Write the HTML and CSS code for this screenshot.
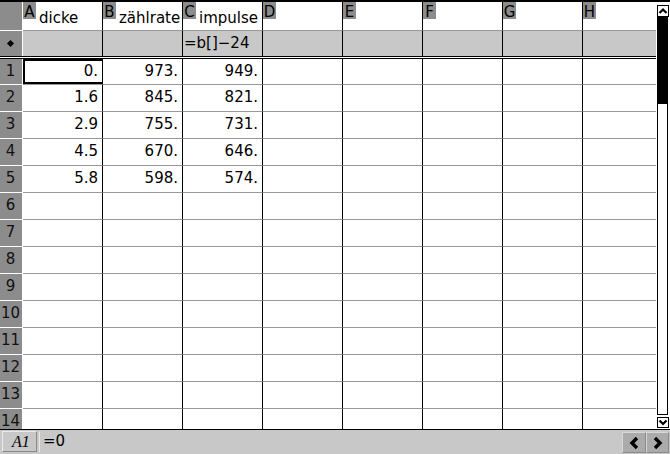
FILE: index.html
```html
<!DOCTYPE html>
<html>
<head>
<meta charset="utf-8">
<link rel="stylesheet" href="styles.css">
</head>
<body>
<div class="app">
  <div class="main">
    <div class="sheet-wrap">
      <div class="sheet">
        <div class="rh"></div>
        <div class="ch"><span class="cl">A</span><span class="cn">dicke</span></div>
        <div class="ch"><span class="cl">B</span><span class="cn">zählrate</span></div>
        <div class="ch"><span class="cl">C</span><span class="cn">impulse</span></div>
        <div class="ch"><span class="cl">D</span></div>
        <div class="ch"><span class="cl">E</span></div>
        <div class="ch"><span class="cl">F</span></div>
        <div class="ch"><span class="cl">G</span></div>
        <div class="ch"><span class="cl">H</span></div>

        <div class="rh rh-formula"><span class="diamond"></span></div>
        <div class="fc"></div>
        <div class="fc"></div>
        <div class="fc">=b[]−24</div>
        <div class="fc"></div>
        <div class="fc"></div>
        <div class="fc"></div>
        <div class="fc"></div>
        <div class="fc"></div>

        <div class="divider"></div>

        <div class="rh">1</div>
        <div class="c num sel">0.</div><div class="c num">973.</div><div class="c num">949.</div><div class="c"></div><div class="c"></div><div class="c"></div><div class="c"></div><div class="c"></div>
        <div class="rh">2</div>
        <div class="c num">1.6</div><div class="c num">845.</div><div class="c num">821.</div><div class="c"></div><div class="c"></div><div class="c"></div><div class="c"></div><div class="c"></div>
        <div class="rh">3</div>
        <div class="c num">2.9</div><div class="c num">755.</div><div class="c num">731.</div><div class="c"></div><div class="c"></div><div class="c"></div><div class="c"></div><div class="c"></div>
        <div class="rh">4</div>
        <div class="c num">4.5</div><div class="c num">670.</div><div class="c num">646.</div><div class="c"></div><div class="c"></div><div class="c"></div><div class="c"></div><div class="c"></div>
        <div class="rh">5</div>
        <div class="c num">5.8</div><div class="c num">598.</div><div class="c num">574.</div><div class="c"></div><div class="c"></div><div class="c"></div><div class="c"></div><div class="c"></div>
        <div class="rh">6</div>
        <div class="c"></div><div class="c"></div><div class="c"></div><div class="c"></div><div class="c"></div><div class="c"></div><div class="c"></div><div class="c"></div>
        <div class="rh">7</div>
        <div class="c"></div><div class="c"></div><div class="c"></div><div class="c"></div><div class="c"></div><div class="c"></div><div class="c"></div><div class="c"></div>
        <div class="rh">8</div>
        <div class="c"></div><div class="c"></div><div class="c"></div><div class="c"></div><div class="c"></div><div class="c"></div><div class="c"></div><div class="c"></div>
        <div class="rh">9</div>
        <div class="c"></div><div class="c"></div><div class="c"></div><div class="c"></div><div class="c"></div><div class="c"></div><div class="c"></div><div class="c"></div>
        <div class="rh">10</div>
        <div class="c"></div><div class="c"></div><div class="c"></div><div class="c"></div><div class="c"></div><div class="c"></div><div class="c"></div><div class="c"></div>
        <div class="rh">11</div>
        <div class="c"></div><div class="c"></div><div class="c"></div><div class="c"></div><div class="c"></div><div class="c"></div><div class="c"></div><div class="c"></div>
        <div class="rh">12</div>
        <div class="c"></div><div class="c"></div><div class="c"></div><div class="c"></div><div class="c"></div><div class="c"></div><div class="c"></div><div class="c"></div>
        <div class="rh">13</div>
        <div class="c"></div><div class="c"></div><div class="c"></div><div class="c"></div><div class="c"></div><div class="c"></div><div class="c"></div><div class="c"></div>
        <div class="rh">14</div>
        <div class="c"></div><div class="c"></div><div class="c"></div><div class="c"></div><div class="c"></div><div class="c"></div><div class="c"></div><div class="c"></div>
      </div>
    </div>
    <div class="scrollbar">
      <div class="sb-btn sb-up">
        <svg width="10" height="10" viewBox="0 0 10 10"><polyline points="1.5,7 5,3.5 8.5,7" fill="none" stroke="#000" stroke-width="2.2"/></svg>
      </div>
      <div class="track"><div class="thumb"></div></div>
      <div class="sb-btn sb-down">
        <svg width="10" height="9" viewBox="0 0 10 9"><polyline points="1.5,2.5 5,6 8.5,2.5" fill="none" stroke="#000" stroke-width="2.2"/></svg>
      </div>
    </div>
  </div>
  <div class="bottom">
    <div class="cellref">A1</div>
    <div class="entry">=0</div>
    <div class="nav">
      <svg width="12" height="14" viewBox="0 0 12 14"><polyline points="9,2 4,7 9,12" fill="none" stroke="#000" stroke-width="3.4"/></svg>
    </div>
    <div class="nav nav-r">
      <svg width="12" height="14" viewBox="0 0 12 14"><polyline points="3,2 8,7 3,12" fill="none" stroke="#000" stroke-width="3.4"/></svg>
    </div>
  </div>
</div>
</body>
</html>
```

FILE: styles.css
```css
* {
  box-sizing: border-box;
}

html, body {
  margin: 0;
  padding: 0;
  background: #fff;
}

body {
  font-family: "DejaVu Sans", sans-serif;
  font-size: 15px;
  color: #000;
}

.app {
  width: 670px;
  height: 454px;
  border-top: 2px solid #000;
  display: flex;
  flex-direction: column;
  overflow: hidden;
}

.main {
  display: flex;
  height: 427px;
}

.sheet-wrap {
  width: 656px;
  height: 427px;
  overflow: hidden;
}

.sheet {
  display: grid;
  grid-template-columns: 23px repeat(8, 80px);
  grid-template-rows: 29px 25px 3px 26px repeat(13, 27px);
  width: 663px;
}

.rh {
  background: #8c8c8c;
  border-right: 1px solid #fff;
  border-bottom: 1px solid #fff;
  text-align: center;
  line-height: 25px;
  color: #111;
  padding-right: 1px;
}

.rh-formula {
  display: flex;
  align-items: center;
  justify-content: center;
  border-bottom: none;
}

.diamond {
  width: 5px;
  height: 5px;
  background: #000;
  transform: rotate(45deg);
}

.ch {
  display: flex;
  align-items: flex-start;
  border-right: 1px solid #000;
  border-bottom: 1px solid #999;
  background: #fff;
}

.cl {
  width: 13px;
  height: 17px;
  background: #8c8c8c;
  text-align: center;
  line-height: 14px;
  padding-top: 3px;
  flex: none;
}

.cn {
  padding-top: 7px;
  padding-left: 3px;
  line-height: 18px;
  white-space: nowrap;
}

.fc {
  background: #c8c8c8;
  border-right: 1px solid #000;
  line-height: 25px;
  padding-left: 1px;
  white-space: nowrap;
}

.divider {
  grid-column: 1 / -1;
  border-top: 1px solid #000;
  border-bottom: 1px solid #000;
  background: #fff;
}

.c {
  border-right: 1px solid #000;
  border-bottom: 1px solid #999;
  background: #fff;
  line-height: 25px;
}

.num {
  text-align: right;
  padding-right: 4px;
}

.sel {
  box-shadow: inset 2px 0 0 #000, inset 0 2px 0 #000, inset 0 -2px 0 #000;
}

.scrollbar {
  width: 14px;
  display: flex;
  flex-direction: column;
  align-items: flex-start;
  padding-top: 3px;
  padding-left: 1px;
  background: #fff;
}

.sb-btn {
  width: 12px;
  border: 1px solid #000;
  background: #fff;
  display: flex;
  align-items: center;
  justify-content: center;
}

.sb-up {
  height: 12px;
}

.sb-down {
  height: 11px;
  margin-top: 2px;
}

.track {
  width: 11px;
  height: 398px;
  border: 1px solid #000;
  background: #fff;
}

.thumb {
  height: 86px;
  background: #000;
}

.bottom {
  height: 25px;
  border-top: 1px solid #000;
  background: #c8c8c8;
  display: flex;
  align-items: flex-start;
  padding: 1px 1px 0 2px;
}

.cellref {
  width: 35px;
  height: 21px;
  border: 1px solid;
  border-color: #eaeaea #8a8a8a #8a8a8a #eaeaea;
  font-family: "Liberation Serif", serif;
  font-style: italic;
  font-size: 16px;
  line-height: 19px;
  padding-left: 9px;
}

.entry {
  flex: 1;
  height: 21px;
  margin-left: 2px;
  border-left: 1px solid #eaeaea;
  border-top: 1px solid #c8c8c8;
  line-height: 19px;
  padding-left: 3px;
}

.nav {
  width: 24px;
  height: 21px;
  margin-top: 1px;
  margin-left: 1px;
  background: #ababab;
  border: 1px solid;
  border-color: #d8d8d8 #8a8a8a #8a8a8a #d8d8d8;
  display: flex;
  align-items: center;
  justify-content: center;
}

.nav-r {
  width: 23px;
  margin-left: 0;
}
```
